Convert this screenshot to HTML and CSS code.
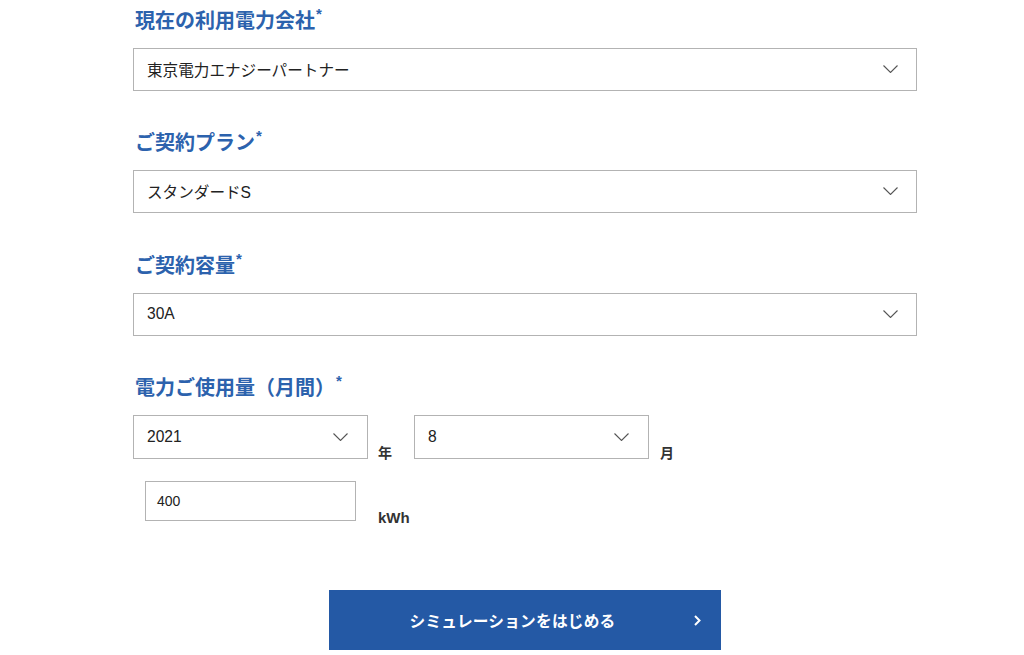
FILE: index.html
```html
<!DOCTYPE html>
<html lang="ja">
<head>
<meta charset="utf-8">
<title>電力シミュレーション</title>
<link rel="stylesheet" href="styles.css">
</head>
<body>
<form class="form">
  <div class="group">
    <div class="label">現在の利用電力会社<span class="req">*</span></div>
    <div class="select">
      <span class="value">東京電力エナジーパートナー</span>
      <svg class="chev" width="15" height="8" viewBox="0 0 15 8"><polyline points="0.5,0.5 7.5,7.5 14.5,0.5" fill="none" stroke="#555" stroke-width="1.1"/></svg>
    </div>
  </div>
  <div class="group">
    <div class="label">ご契約プラン<span class="req">*</span></div>
    <div class="select">
      <span class="value">スタンダードS</span>
      <svg class="chev" width="15" height="8" viewBox="0 0 15 8"><polyline points="0.5,0.5 7.5,7.5 14.5,0.5" fill="none" stroke="#555" stroke-width="1.1"/></svg>
    </div>
  </div>
  <div class="group">
    <div class="label">ご契約容量<span class="req">*</span></div>
    <div class="select">
      <span class="value">30A</span>
      <svg class="chev" width="15" height="8" viewBox="0 0 15 8"><polyline points="0.5,0.5 7.5,7.5 14.5,0.5" fill="none" stroke="#555" stroke-width="1.1"/></svg>
    </div>
  </div>
  <div class="group last">
    <div class="label">電力ご使用量（月間）<span class="req">*</span></div>
    <div class="row">
      <div class="select small">
        <span class="value">2021</span>
        <svg class="chev" width="15" height="8" viewBox="0 0 15 8"><polyline points="0.5,0.5 7.5,7.5 14.5,0.5" fill="none" stroke="#555" stroke-width="1.1"/></svg>
      </div>
      <span class="unit unit-year">年</span>
      <div class="select small">
        <span class="value">8</span>
        <svg class="chev" width="15" height="8" viewBox="0 0 15 8"><polyline points="0.5,0.5 7.5,7.5 14.5,0.5" fill="none" stroke="#555" stroke-width="1.1"/></svg>
      </div>
      <span class="unit unit-month">月</span>
    </div>
    <div class="row kwh-row">
      <div class="input">400</div>
      <span class="unit unit-kwh">kWh</span>
    </div>
  </div>
  <div class="actions">
    <div class="button">
      <span class="button-text">シミュレーションをはじめる</span>
      <svg class="button-chev" width="7" height="11" viewBox="0 0 7 11"><polyline points="1,1 5.5,5.5 1,10" fill="none" stroke="#fff" stroke-width="2"/></svg>
    </div>
  </div>
</form>
</body>
</html>
```

FILE: styles.css
```css
html, body {
  margin: 0;
  padding: 0;
  background: #ffffff;
}

body {
  font-family: "Liberation Sans", "Noto Sans CJK JP", sans-serif;
  color: #222;
}

.form {
  width: 784px;
  margin-left: 133px;
  padding-top: 5.6px;
}

.group {
  margin-bottom: 37.5px;
}

.group.last {
  margin-bottom: 0;
}

.label {
  font-size: 20px;
  line-height: 30px;
  height: 30px;
  font-weight: bold;
  color: #2c62ad;
  margin-bottom: 12px;
  padding-left: 2px;
  white-space: nowrap;
}

.req {
  font-size: 15px;
  vertical-align: 9px;
  line-height: 0;
  margin-left: 1px;
}

.select {
  box-sizing: border-box;
  height: 43px;
  border: 1px solid #b3b3b3;
  display: flex;
  align-items: center;
  justify-content: space-between;
  padding: 0 18px 1px 13px;
  background: #fff;
}

.value {
  font-size: 15.6px;
  color: #222;
  white-space: nowrap;
}

.chev {
  display: block;
  flex: none;
}

.row {
  display: flex;
  align-items: flex-end;
}

.select.small {
  width: 235px;
  height: 44px;
  padding-right: 19px;
}

.unit {
  font-size: 14px;
  line-height: 14px;
  font-weight: bold;
  color: #333;
  white-space: nowrap;
}

.unit-year {
  margin: 0 22px -1px 10px;
}

.unit-month {
  margin: 0 0 -1px 11px;
}

.kwh-row {
  margin-top: 22px;
  padding-left: 12px;
}

.input {
  box-sizing: border-box;
  width: 211px;
  height: 40px;
  border: 1px solid #b3b3b3;
  padding: 0 11px;
  font-size: 14px;
  line-height: 38px;
  color: #222;
}

.unit-kwh {
  font-size: 15px;
  line-height: 15px;
  margin: 0 0 -4px 22px;
}

.actions {
  margin-top: 69px;
}

.button {
  width: 392px;
  height: 60px;
  margin: 0 auto;
  background: #2459a5;
  display: flex;
  align-items: center;
  padding: 0 20px 0 2px;
  box-sizing: border-box;
}

.button-text {
  flex: 1;
  text-align: center;
  color: #fff;
  font-weight: bold;
  font-size: 15.7px;
  letter-spacing: 0.2px;
  white-space: nowrap;
}

.button-chev {
  display: block;
  flex: none;
}
```
